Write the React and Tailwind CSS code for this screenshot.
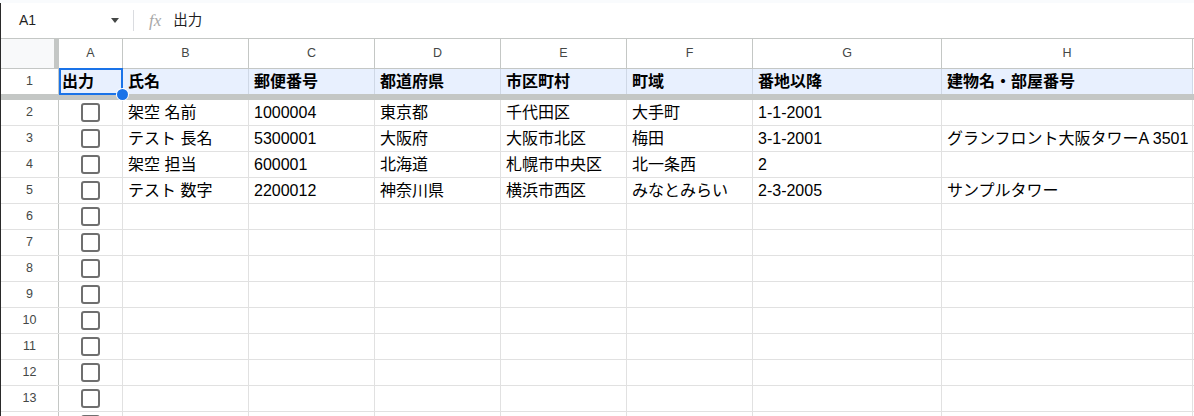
import React from 'react';

const font = "font-['Liberation_Sans','Noto_Sans_CJK_JP',sans-serif]";

// column widths incl. right border
const cols = [
    { key: 'A', w: 'w-[64px]' },
    { key: 'B', w: 'w-[126px]' },
    { key: 'C', w: 'w-[126px]' },
    { key: 'D', w: 'w-[126px]' },
    { key: 'E', w: 'w-[126px]' },
    { key: 'F', w: 'w-[126px]' },
    { key: 'G', w: 'w-[189px]' },
    { key: 'H', w: 'w-[251px]' },
];

const headers = ['出力', '氏名', '郵便番号', '都道府県', '市区町村', '町域', '番地以降', '建物名・部屋番号'];

const data = [
    ['架空 名前', '1000004', '東京都', '千代田区', '大手町', '1-1-2001', ''],
    ['テスト 長名', '5300001', '大阪府', '大阪市北区', '梅田', '3-1-2001', 'グランフロント大阪タワーA 3501'],
    ['架空 担当', '600001', '北海道', '札幌市中央区', '北一条西', '2', ''],
    ['テスト 数字', '2200012', '神奈川県', '横浜市西区', 'みなとみらい', '2-3-2005', 'サンプルタワー'],
];

const Checkbox = () => (
    <div className="w-[19px] h-[19px] rounded-[3px] border-2 border-[#6f6f6f] bg-white" />
);

const Toolbar = () => (
    <div className="flex shrink-0 items-center h-[36px] border-b border-[#c4c7c5]">
        <div className="flex items-center w-[132px] pl-[18px] pr-[14px]">
            <span className="text-[14px] text-[#1f1f1f]">A1</span>
            <span className="ml-auto w-0 h-0 border-l-[4px] border-r-[4px] border-t-[5px] border-l-transparent border-r-transparent border-t-[#444746]" />
        </div>
        <div className="w-px h-[21px] bg-[#dadce0]" />
        <span className="ml-[15px] text-[17px] italic text-[#a8a8a8] font-['Liberation_Serif',serif] leading-none">fx</span>
        <span className="ml-[12px] text-[14.5px] text-[#1f1f1f]">出力</span>
    </div>
);

const ColumnHeader = () => (
    <div className="flex shrink-0 h-[30px] border-b border-[#c4c7c5]">
        <div className="w-[58px] shrink-0 bg-[#f8f9fa] border-r-[5px] border-[#c4c7c5]" />
        {cols.map((c) => (
            <div
                key={c.key}
                className={`${c.w} shrink-0 flex items-center justify-center border-r border-[#c4c7c5] text-[12.5px] text-[#444746]`}
            >
                {c.key}
            </div>
        ))}
        <div className="flex-1" />
    </div>
);

const HeaderRow = () => (
    <div className="flex shrink-0 h-[25px] bg-[#e8f0fe]">
        <div className="w-[58px] shrink-0 bg-white border-r border-[#c4c7c5] flex items-center justify-center text-[12.5px] text-[#444746]">
            1
        </div>
        {cols.map((c, i) => (
            <div
                key={c.key}
                className={`${c.w} shrink-0 relative flex items-center border-r border-[#cfd8e6] font-bold text-[16px] text-black whitespace-nowrap ${
                    i === 0 ? 'pl-[3px]' : 'pl-[5px]'
                }`}
            >
                {headers[i]}
                {i === 0 && (
                    <>
                        <div className="absolute -top-px left-0 right-[-1px] bottom-[-1px] border-2 border-[#1a73e8] pointer-events-none" />
                        <div className="absolute right-[-6px] bottom-[-6px] w-[11px] h-[11px] rounded-full bg-[#1a73e8] ring-1 ring-white z-10" />
                    </>
                )}
            </div>
        ))}
        <div className="flex-1 bg-white" />
    </div>
);

const DataRow = ({ num, cells }) => (
    <div className="flex h-[26px] shrink-0 border-b border-[#e1e1e1]">
        <div className="w-[58px] shrink-0 border-r border-[#c4c7c5] flex items-center justify-center text-[12.5px] text-[#444746]">
            {num}
        </div>
        <div className={`${cols[0].w} shrink-0 flex items-center justify-center border-r border-[#e1e1e1]`}>
            <Checkbox />
        </div>
        {cols.slice(1).map((c, i) => (
            <div
                key={c.key}
                className={`${c.w} shrink-0 flex items-center pl-[5px] border-r border-[#e1e1e1] text-[16px] text-black whitespace-nowrap overflow-hidden`}
            >
                {cells ? cells[i] : ''}
            </div>
        ))}
        <div className="flex-1" />
    </div>
);

export default function App() {
    const rows = [];
    for (let n = 2; n <= 13; n++) {
        rows.push(<DataRow key={n} num={n} cells={data[n - 2]} />);
    }
    // row 14 only peeks in at the bottom edge
    rows.push(<DataRow key={14} num="" />);

    return (
        <div className={`w-[1194px] h-[416px] overflow-hidden bg-white ${font}`}>
            <div className="h-[3px] bg-[#f9fbfd]" />
            <div className="border-l border-[#2a2a2a] h-[413px] flex flex-col overflow-hidden">
                <Toolbar />
                <ColumnHeader />
                <HeaderRow />
                <div className="h-[6px] shrink-0 bg-[#c4c7c5]" />
                {rows}
            </div>
        </div>
    );
}
